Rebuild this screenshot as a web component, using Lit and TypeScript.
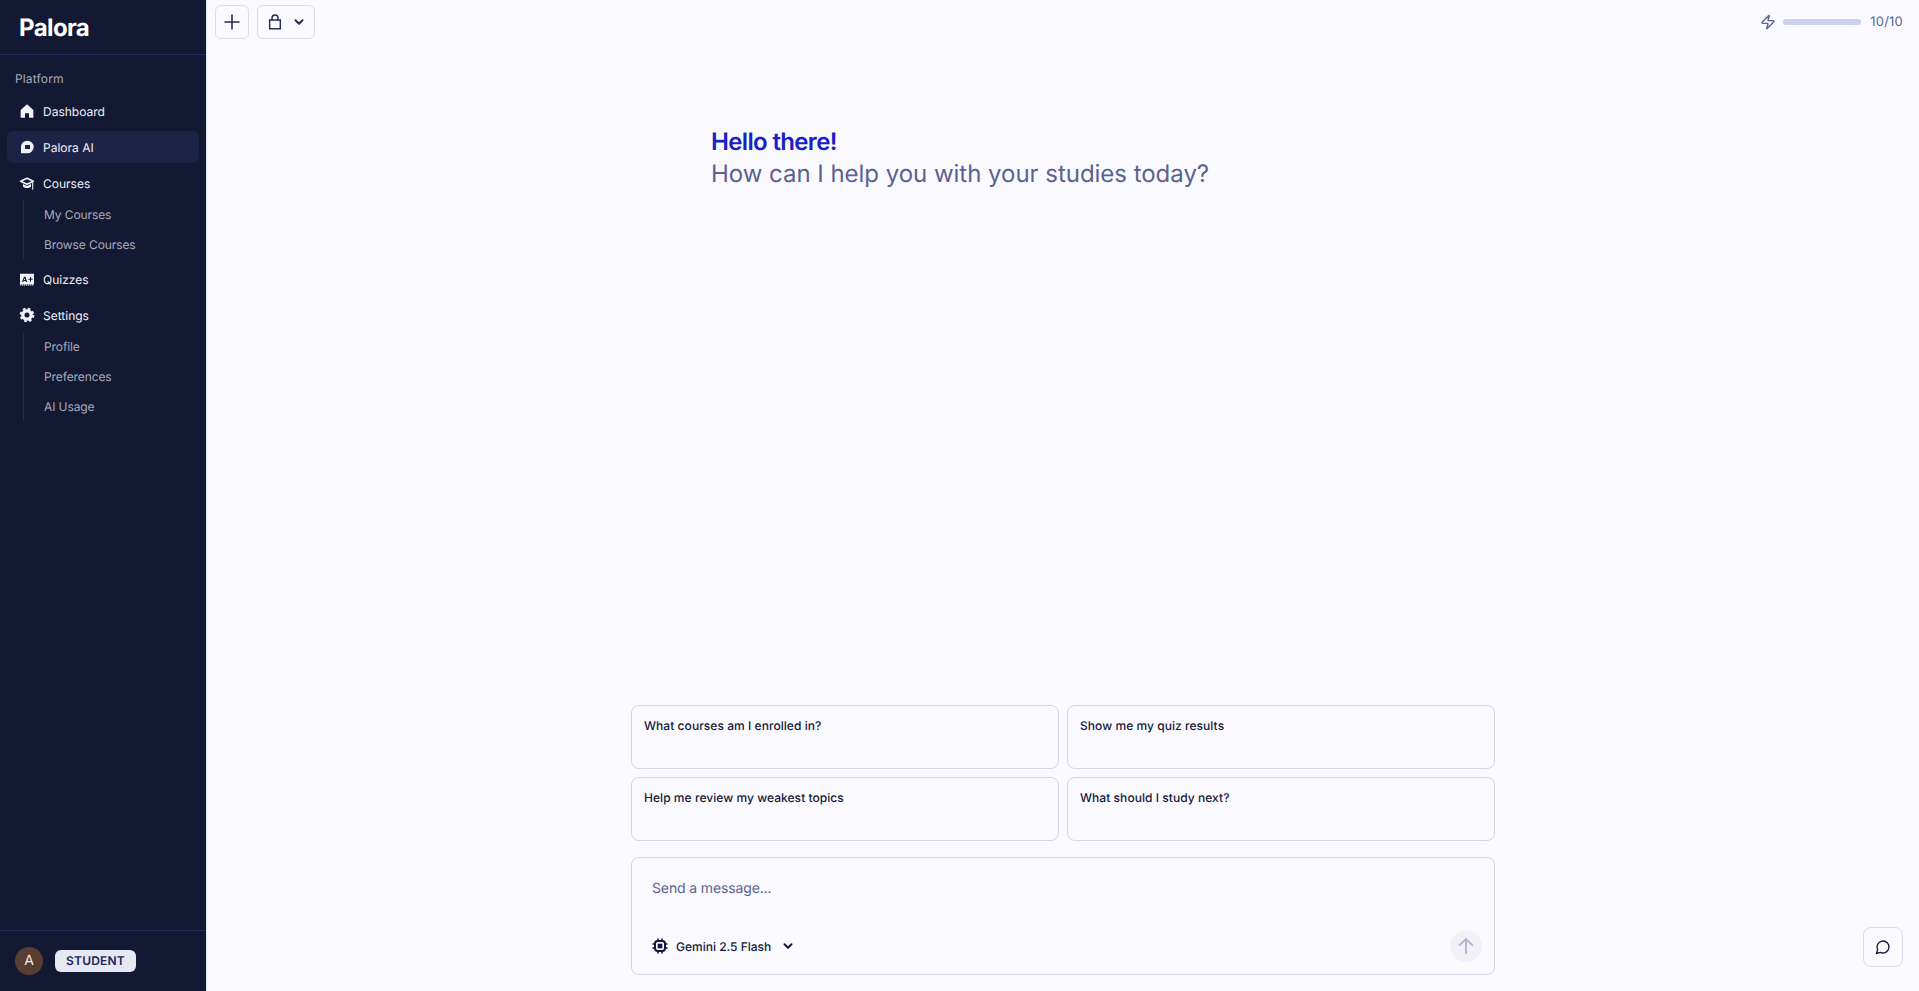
import { LitElement, css, html, svg } from 'lit';
import { customElement } from 'lit/decorators.js';

const icon = (body: unknown, size = 16, cls = '') => html`
  <svg class=${cls} width=${size} height=${size} viewBox="0 0 24 24" fill="none" stroke="currentColor"
    stroke-width="2" stroke-linecap="round" stroke-linejoin="round">${body}</svg>`;

const chevron = svg`<path d="m6 9 6 6 6-6" stroke-width="3.400" />`;

const homeIcon = svg`<path fill="currentColor" stroke="none" d="M12 2 2.500 10.500V22h6.500v-6.500h6V22h6.500V10.500z" />`;
const chatIcon = svg`<path fill="currentColor" stroke="none" fill-rule="evenodd" d="M12.500 2.500a9.500 9.500 0 1 1 0 19H3v-9.500a9.500 9.500 0 0 1 9.500-9.500ZM9 9v6h7.500V9Z" />`;
const gradIcon = svg`<path d="M12 5 2.500 9.500 12 14l9.500-4.500z" stroke-width="2.400" /><path d="M6 13.500v4c3.500 2.800 8.500 2.800 12 0v-4l-6 3z" fill="currentColor" stroke="none" /><path d="M20.500 10.500v11" stroke-width="1.600" />`;
const quizIcon = svg`<path fill="currentColor" stroke="none" fill-rule="evenodd" d="M1.500 4h21v16h-21ZM4.500 16.500h1.800l.6-1.600h3l.6 1.600h1.800L9.700 8.500H7.500ZM7.400 13.400l1-3 1 3ZM14 11.500v1.600h2.500v2.500h1.600v-2.500h2.400v-1.600h-2.400V9h-1.600v2.500Z" /><path d="M1.500 20.800h21" stroke-width="1.600" stroke-linecap="butt" stroke-dasharray="2 1" />`;
const gearIcon = svg`<circle cx="12" cy="12" r="6.300" stroke-width="5" /><circle cx="12" cy="12" r="9.500" stroke-width="3" stroke-linecap="butt" stroke-dasharray="4 3.460" />`;
const plusIcon = svg`<path d="M12 5v14M5 12h14" stroke-width="1.600" />`;
const lockIcon = svg`<path d="M4 9h16v13H4z" stroke-linecap="butt" stroke-linejoin="miter" stroke-width="2.200" /><path d="M7.500 9V6a4.500 4.500 0 0 1 9 0v3" stroke-width="2.200" />`;
const zapIcon = svg`<path d="M4 14a1 1 0 0 1-.78-1.630l9.900-10.200a.5.5 0 0 1 .86.46l-1.920 6.020A1 1 0 0 0 13 10h7a1 1 0 0 1 .78 1.630l-9.900 10.200a.5.5 0 0 1-.86-.46l1.920-6.020A1 1 0 0 0 11 14z" />`;
const chipIcon = svg`<rect x="4.500" y="4.500" width="15" height="15" rx="4" stroke-width="3" /><rect x="8.500" y="8.500" width="7" height="7" fill="currentColor" stroke="none" /><path d="M9 1.500v3M15 1.500v3M9 19.500v3M15 19.500v3M1.500 9h3M1.500 15h3M19.500 9h3M19.500 15h3" stroke-width="2.400" />`;
const arrowUp = svg`<path d="M12 20.500V3.500M4.500 11 12 3.500 19.500 11" stroke-width="2.400" />`;
const bubbleIcon = svg`<path d="M7.900 20A9 9 0 1 0 4 16.100L2 22Z" />`;

@customElement('app-root')
export class AppRoot extends LitElement {
  static styles = css`
    :host {
      display: flex;
      height: 991px;
      overflow: hidden;
      background: #fafafe;
      font-family: Inter, 'Noto Sans', sans-serif;
      color: #14183a;
      text-rendering: geometricPrecision;
    }

    .sidebar {
      flex: 0 0 206px;
      display: flex;
      flex-direction: column;
      background: #131833;
      border-right: 1px solid #e6e6f2;
      color: #f4f4fa;
    }

    .logo {
      height: 54px;
      padding-left: 19px;
      border-bottom: 1px solid #252a58;
      font-size: 24px;
      font-weight: 700;
      line-height: 56px;
      letter-spacing: -0.6px;
      color: #fff;
    }

    .nav {
      flex: 1;
      padding: 8px 7px;
    }

    .group-label {
      height: 32px;
      padding-left: 8px;
      font-size: 12px;
      line-height: 32px;
      letter-spacing: 0.15px;
      color: #a9abbc;
    }

    .item {
      display: flex;
      align-items: center;
      gap: 8px;
      height: 32px;
      padding-left: 12px;
      border-radius: 6px;
      font-size: 12px;
      color: #f1f1f8;
    }

    .item + .item,
    .subs + .item {
      margin-top: 4px;
    }

    .item svg {
      flex: none;
    }

    .item.active {
      background: #1d2347;
    }

    .subs {
      display: flex;
      flex-direction: column;
      gap: 2px;
      margin: 2px 0 0 16px;
      padding-left: 20px;
      border-left: 1px solid #252a58;
    }

    .sub {
      height: 28px;
      font-size: 12px;
      line-height: 28px;
      letter-spacing: -0.1px;
      color: #a9abbc;
    }

    .user {
      display: flex;
      align-items: center;
      gap: 12px;
      height: 60px;
      padding-left: 15px;
      border-top: 1px solid #252a58;
    }

    .avatar {
      width: 28px;
      height: 28px;
      border-radius: 50%;
      background: #5a3d31;
      color: #f3e9e2;
      font-size: 14px;
      line-height: 28px;
      text-align: center;
    }

    .badge {
      padding: 0 11px;
      height: 22px;
      border-radius: 6px;
      background: #e6e8f4;
      color: #1d2458;
      font-size: 12px;
      font-weight: 600;
      line-height: 22px;
      letter-spacing: 0.2px;
    }

    .main {
      flex: 1;
      min-width: 0;
      display: flex;
      flex-direction: column;
      position: relative;
    }

    .topbar {
      display: flex;
      align-items: center;
      gap: 8px;
      height: 34px;
      padding: 5px 16px 0 8px;
    }

    .btn {
      display: flex;
      align-items: center;
      justify-content: center;
      box-sizing: border-box;
      height: 34px;
      border: 1px solid #dcdbec;
      border-radius: 6px;
      color: #2a2e52;
    }

    .btn.square {
      width: 34px;
    }

    .btn.lock {
      width: 58px;
      gap: 9px;
    }

    .usage {
      margin-left: auto;
      display: flex;
      align-items: center;
      gap: 9px;
      font-size: 13px;
      letter-spacing: 0.2px;
      color: #5b6191;
    }

    .usage svg {
      margin-right: -2px;
    }

    .usage-bar {
      width: 78px;
      height: 6px;
      border-radius: 3px;
      background: #cbd0ef;
    }

    .greeting {
      width: 704px;
      margin: 87px auto 0;
      flex: 1;
    }

    .hello {
      font-size: 24px;
      font-weight: 600;
      line-height: 32px;
      letter-spacing: -0.65px;
      color: #1721c4;
    }

    .help {
      font-size: 24px;
      line-height: 32px;
      letter-spacing: -0.03px;
      color: #5b6191;
    }

    .composer {
      width: 864px;
      margin: 0 auto 16px;
    }

    .cards {
      display: grid;
      grid-template-columns: 1fr 1fr;
      gap: 8px;
      margin-bottom: 16px;
    }

    .card {
      box-sizing: border-box;
      height: 64px;
      padding: 12px;
      border: 1px solid #d5d4e6;
      border-radius: 8px;
      font-size: 12px;
      font-weight: 450;
      letter-spacing: 0.05px;
      line-height: 16px;
    }

    .input {
      box-sizing: border-box;
      height: 118px;
      padding: 21px 20px 0;
      border: 1px solid #d5d4e6;
      border-radius: 8px;
      display: flex;
      flex-direction: column;
    }

    .placeholder {
      font-size: 14px;
      line-height: 20px;
      letter-spacing: -0.13px;
      color: #5b6191;
      flex: 1;
    }

    .input-row {
      display: flex;
      align-items: center;
      justify-content: space-between;
      height: 32px;
      margin: 0 -8px 12px 0;
    }

    .model {
      display: flex;
      align-items: center;
      gap: 8px;
      font-size: 12px;
      font-weight: 450;
    }

    .model .chev {
      margin-left: 2px;
    }

    .send {
      width: 32px;
      height: 32px;
      border-radius: 50%;
      background: #f1f1f7;
      color: #b4b6d0;
      display: flex;
      align-items: center;
      justify-content: center;
    }

    .float {
      position: absolute;
      right: 16px;
      bottom: 24px;
      width: 40px;
      height: 40px;
      box-sizing: border-box;
      border: 1px solid #dcdbec;
      border-radius: 8px;
      display: flex;
      align-items: center;
      justify-content: center;
    }
  `;

  render() {
    return html`
      <aside class="sidebar">
        <div class="logo">Palora</div>
        <nav class="nav">
          <div class="group-label">Platform</div>
          <div class="item">${icon(homeIcon)}Dashboard</div>
          <div class="item active">${icon(chatIcon)}Palora AI</div>
          <div class="item">${icon(gradIcon)}Courses</div>
          <div class="subs">
            <div class="sub">My Courses</div>
            <div class="sub">Browse Courses</div>
          </div>
          <div class="item">${icon(quizIcon)}Quizzes</div>
          <div class="item">${icon(gearIcon)}Settings</div>
          <div class="subs">
            <div class="sub">Profile</div>
            <div class="sub">Preferences</div>
            <div class="sub">AI Usage</div>
          </div>
        </nav>
        <div class="user">
          <div class="avatar">A</div>
          <div class="badge">STUDENT</div>
        </div>
      </aside>
      <main class="main">
        <div class="topbar">
          <div class="btn square">${icon(plusIcon, 24)}</div>
          <div class="btn lock">${icon(lockIcon, 16)}${icon(chevron, 14)}</div>
          <div class="usage">
            ${icon(zapIcon, 16)}
            <div class="usage-bar"></div>
            <span>10/10</span>
          </div>
        </div>
        <div class="greeting">
          <div class="hello">Hello there!</div>
          <div class="help">How can I help you with your studies today?</div>
        </div>
        <div class="composer">
          <div class="cards">
            <div class="card">What courses am I enrolled in?</div>
            <div class="card">Show me my quiz results</div>
            <div class="card">Help me review my weakest topics</div>
            <div class="card">What should I study next?</div>
          </div>
          <div class="input">
            <div class="placeholder">Send a message...</div>
            <div class="input-row">
              <div class="model">${icon(chipIcon, 16)}Gemini 2.5 Flash${icon(chevron, 14, 'chev')}</div>
              <div class="send">${icon(arrowUp, 20)}</div>
            </div>
          </div>
        </div>
        <div class="float">${icon(bubbleIcon, 16)}</div>
      </main>
    `;
  }
}
